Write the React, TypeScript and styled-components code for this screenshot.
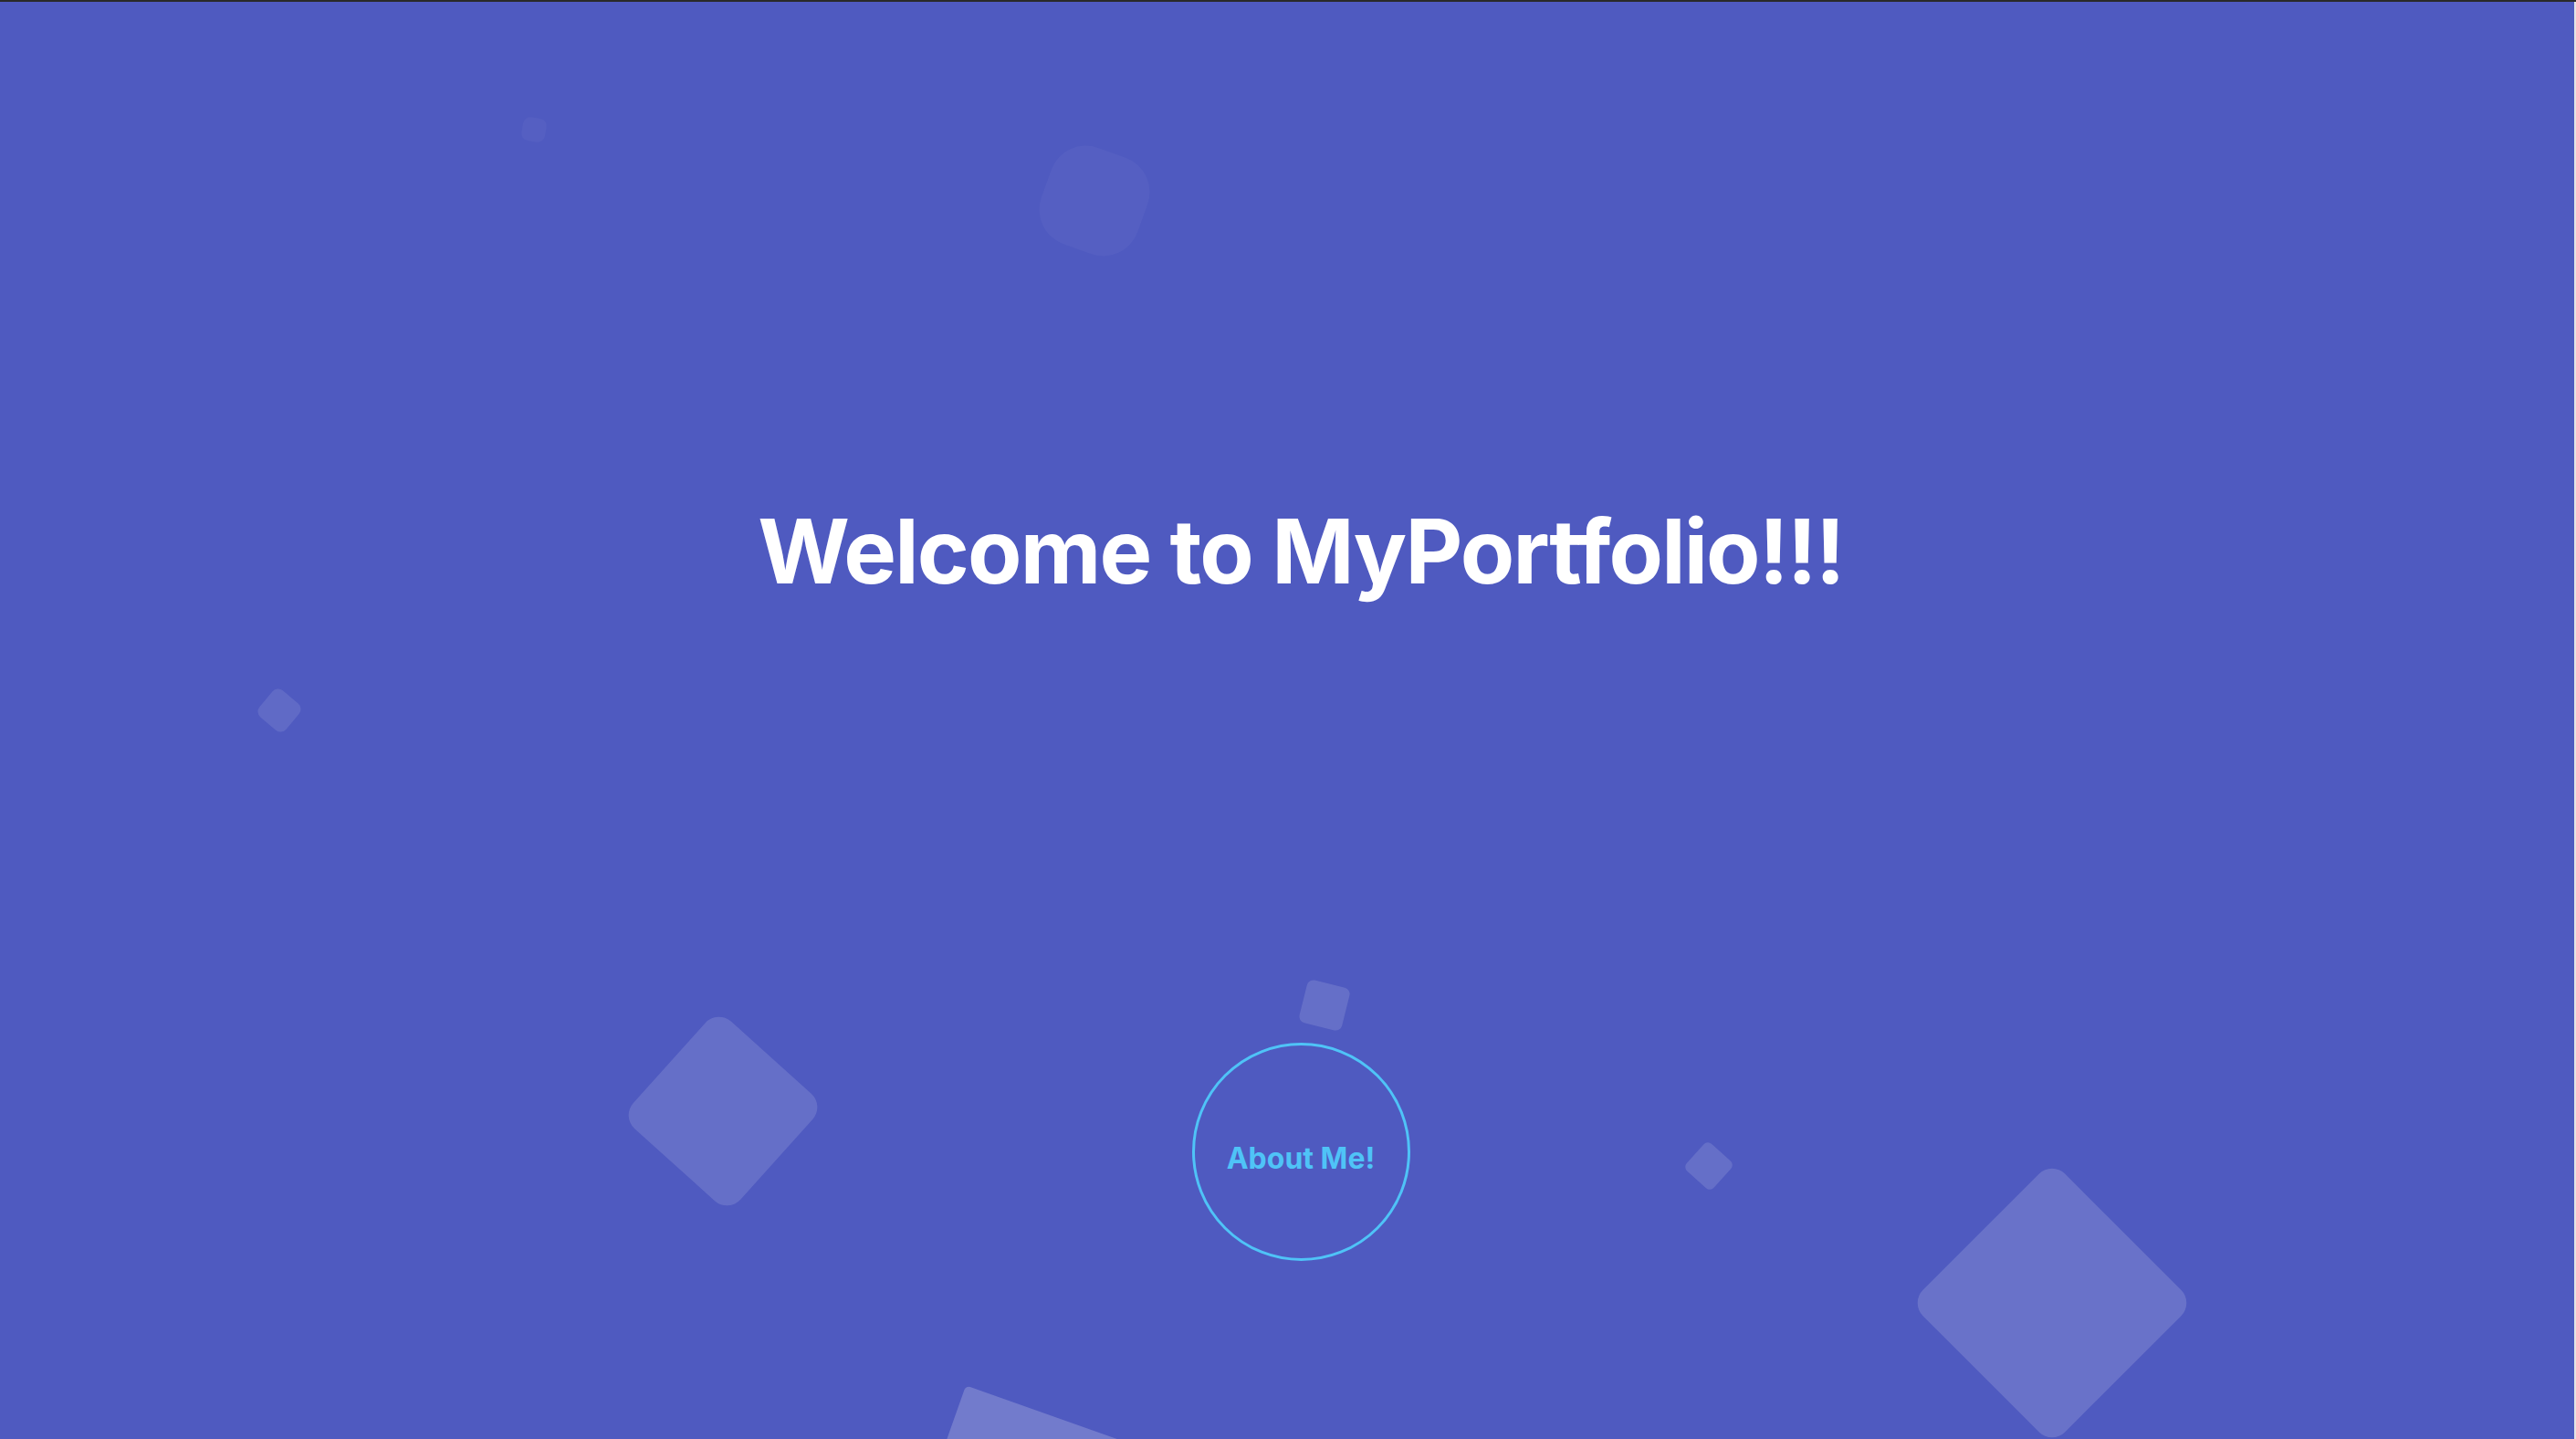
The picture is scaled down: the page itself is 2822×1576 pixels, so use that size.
import React from "react";
import styled, { createGlobalStyle } from "styled-components";

const GlobalStyle = createGlobalStyle`
  html, body {
    margin: 0;
    padding: 0;
    width: 100%;
    height: 100%;
    overflow: hidden;
    background: #e4e4e4;
  }
  #root {
    width: 100%;
    height: 100%;
  }
  * { box-sizing: border-box; }
`;

const Frame = styled.div`
  width: 100vw;
  height: 100vh;
  display: flex;
  flex-direction: column;
  border-top: 2px solid #2a2a2a;
  background: #e4e4e4;
`;

const Hero = styled.section`
  position: relative;
  flex: 1;
  width: calc(100% - 2px);
  overflow: hidden;
  background: #4f5ac0;
`;

const Content = styled.div`
  position: relative;
  z-index: 1;
  display: flex;
  flex-direction: column;
  align-items: center;
  padding: 553px 0 0 30px;
  gap: 490px;
`;

const Title = styled.h1`
  margin: 0;
  font-family: Inter, "Liberation Sans", sans-serif;
  font-weight: 700;
  font-size: 97px;
  line-height: 1;
  letter-spacing: -1.8px;
  color: #ffffff;
`;

const AboutButton = styled.button`
  width: 239px;
  height: 239px;
  border-radius: 50%;
  border: 3.5px solid #4fc3f7;
  background: transparent;
  display: flex;
  align-items: center;
  justify-content: center;
  padding: 14px 0 0 0;
  font-family: Inter, "Liberation Sans", sans-serif;
  font-weight: 700;
  font-size: 32px;
  color: #4fc3f7;
  cursor: pointer;
`;

const Squares = styled.ul`
  position: absolute;
  inset: 0;
  margin: 0;
  padding: 0;
  list-style: none;
  pointer-events: none;
`;

const Square = styled.li<{
  $x: number;
  $y: number;
  $size: number;
  $rot: number;
  $radius: number;
  $alpha: number;
}>`
  position: absolute;
  left: ${(p) => p.$x - p.$size / 2}px;
  top: ${(p) => p.$y - p.$size / 2 - 2}px;
  width: ${(p) => p.$size}px;
  height: ${(p) => p.$size}px;
  border-radius: ${(p) => p.$radius}px;
  transform: rotate(${(p) => p.$rot}deg);
  background: rgba(255, 255, 255, ${(p) => p.$alpha});
`;

const squares = [
  { x: 585, y: 142, size: 26, rot: 10, radius: 8, alpha: 0.035 },
  { x: 1199, y: 220, size: 112, rot: 20, radius: 40, alpha: 0.035 },
  { x: 306, y: 778, size: 38, rot: 40, radius: 8, alpha: 0.1 },
  { x: 792, y: 1217, size: 158, rot: 42, radius: 20, alpha: 0.13 },
  { x: 1451, y: 1101, size: 48, rot: 14, radius: 7, alpha: 0.13 },
  { x: 1872, y: 1277, size: 40, rot: 42, radius: 6, alpha: 0.13 },
  { x: 2248, y: 1427, size: 220, rot: 45, radius: 20, alpha: 0.15 },
  { x: 1119, y: 1645, size: 200, rot: 19.5, radius: 5, alpha: 0.2 },
  { x: 2008, y: 1586, size: 20, rot: 0, radius: 2, alpha: 0.2 },
];

export default function App() {
  return (
    <>
      <GlobalStyle />
      <Frame>
        <Hero>
          <Squares>
            {squares.map((s, i) => (
              <Square
                key={i}
                $x={s.x}
                $y={s.y}
                $size={s.size}
                $rot={s.rot}
                $radius={s.radius}
                $alpha={s.alpha}
              />
            ))}
          </Squares>
          <Content>
            <Title>Welcome to MyPortfolio!!!</Title>
            <AboutButton>About Me!</AboutButton>
          </Content>
        </Hero>
      </Frame>
    </>
  );
}
